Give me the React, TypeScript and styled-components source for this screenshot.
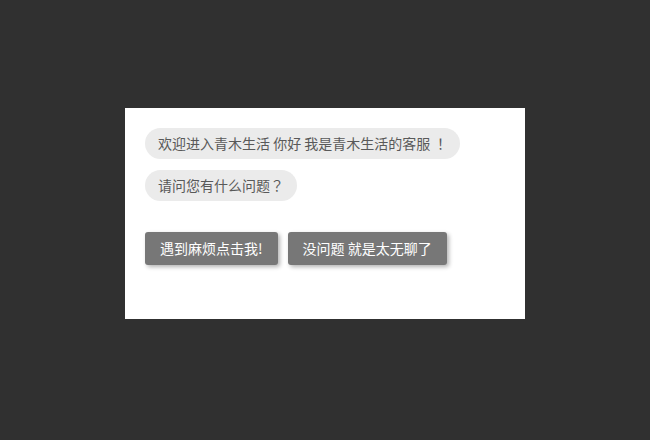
import React from "react";
import styled, { createGlobalStyle } from "styled-components";

const Global = createGlobalStyle`
  html, body { margin: 0; padding: 0; background: #303030; }
  body { font-family: "Microsoft YaHei", "Noto Sans CJK SC", "Noto Sans", sans-serif; }
`;

const Page = styled.div`
  width: 650px;
  height: 440px;
  display: flex;
  justify-content: center;
  align-items: flex-start;
  padding-top: 108px;
  box-sizing: border-box;
`;

const Panel = styled.div`
  width: 400px;
  height: 211px;
  background: #ffffff;
  box-sizing: border-box;
  padding: 20px;
  display: flex;
  flex-direction: column;
  align-items: flex-start;
`;

const Bubble = styled.div`
  background: #ebebeb;
  color: #595959;
  font-size: 14px;
  line-height: 31px;
  height: 31px;
  padding: 0 13px;
  border-radius: 16px;
  white-space: nowrap;
  margin-bottom: 11px;
`;

const Punct = styled.span`
  font-family: "Noto Sans CJK JP", "Noto Sans CJK SC", sans-serif;
`;

const Actions = styled.div`
  display: flex;
  gap: 10px;
  margin-top: 20px;
`;

const Button = styled.button`
  font-family: inherit;
  border: none;
  background: #777777;
  color: #ffffff;
  font-size: 14px;
  height: 33px;
  line-height: 33px;
  padding: 0 15px;
  border-radius: 3px;
  box-shadow: 2px 2px 4px rgba(0, 0, 0, 0.3);
  cursor: pointer;
  white-space: nowrap;
`;

export default function App() {
  return (
    <>
      <Global />
      <Page>
        <Panel>
          <Bubble>
            欢迎进入青木生活 你好 我是青木生活的客服 <Punct>！</Punct>
          </Bubble>
          <Bubble>
            请问您有什么问题<Punct>？</Punct>
          </Bubble>
          <Actions>
            <Button>遇到麻烦点击我!</Button>
            <Button>没问题 就是太无聊了</Button>
          </Actions>
        </Panel>
      </Page>
    </>
  );
}
